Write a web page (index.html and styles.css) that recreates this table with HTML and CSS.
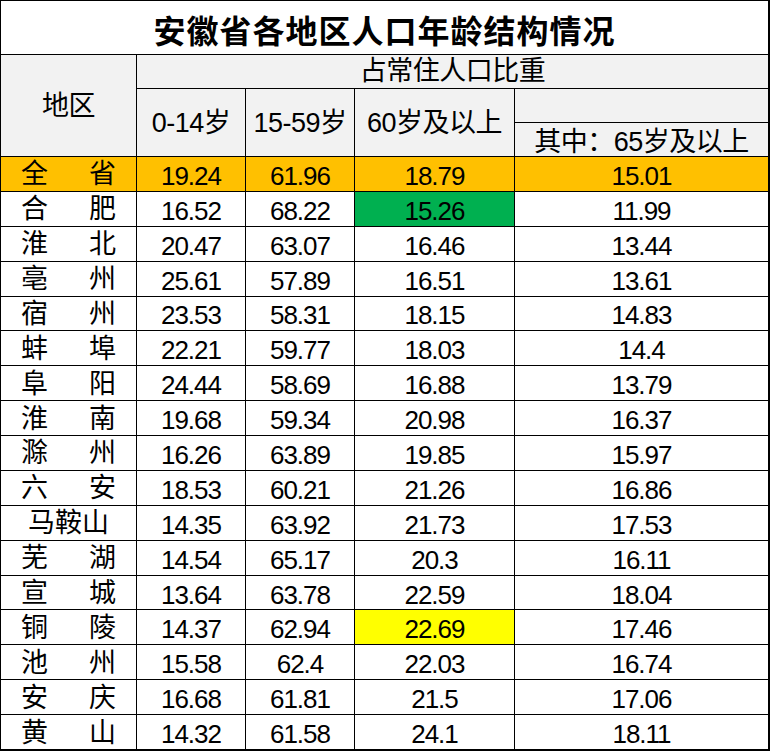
FILE: index.html
```html
<!DOCTYPE html>
<html lang="zh-CN">
<head>
<meta charset="utf-8">
<title>安徽省各地区人口年龄结构情况</title>
<link rel="stylesheet" href="styles.css">
</head>
<body>
<div class="sheet">
  <div class="title">安徽省各地区人口年龄结构情况</div>
  <div class="hd hd-region">地区</div>
  <div class="hd hd-share">占常住人口比重</div>
  <div class="hd hd-c2">0-14岁</div>
  <div class="hd hd-c3">15-59岁</div>
  <div class="hd hd-c4">60岁及以上</div>
  <div class="hd hd-c5a"></div>
  <div class="hd hd-c5b">其中：65岁及以上</div>

  <div class="cell name total"><span>全</span><span>省</span></div>
  <div class="cell num total">19.24</div>
  <div class="cell num total">61.96</div>
  <div class="cell num total">18.79</div>
  <div class="cell num total">15.01</div>

  <div class="cell name"><span>合</span><span>肥</span></div>
  <div class="cell num">16.52</div>
  <div class="cell num">68.22</div>
  <div class="cell num green">15.26</div>
  <div class="cell num">11.99</div>

  <div class="cell name"><span>淮</span><span>北</span></div>
  <div class="cell num">20.47</div>
  <div class="cell num">63.07</div>
  <div class="cell num">16.46</div>
  <div class="cell num">13.44</div>

  <div class="cell name"><span>亳</span><span>州</span></div>
  <div class="cell num">25.61</div>
  <div class="cell num">57.89</div>
  <div class="cell num">16.51</div>
  <div class="cell num">13.61</div>

  <div class="cell name"><span>宿</span><span>州</span></div>
  <div class="cell num">23.53</div>
  <div class="cell num">58.31</div>
  <div class="cell num">18.15</div>
  <div class="cell num">14.83</div>

  <div class="cell name"><span>蚌</span><span>埠</span></div>
  <div class="cell num">22.21</div>
  <div class="cell num">59.77</div>
  <div class="cell num">18.03</div>
  <div class="cell num">14.4</div>

  <div class="cell name"><span>阜</span><span>阳</span></div>
  <div class="cell num">24.44</div>
  <div class="cell num">58.69</div>
  <div class="cell num">16.88</div>
  <div class="cell num">13.79</div>

  <div class="cell name"><span>淮</span><span>南</span></div>
  <div class="cell num">19.68</div>
  <div class="cell num">59.34</div>
  <div class="cell num">20.98</div>
  <div class="cell num">16.37</div>

  <div class="cell name"><span>滁</span><span>州</span></div>
  <div class="cell num">16.26</div>
  <div class="cell num">63.89</div>
  <div class="cell num">19.85</div>
  <div class="cell num">15.97</div>

  <div class="cell name"><span>六</span><span>安</span></div>
  <div class="cell num">18.53</div>
  <div class="cell num">60.21</div>
  <div class="cell num">21.26</div>
  <div class="cell num">16.86</div>

  <div class="cell name single">马鞍山</div>
  <div class="cell num">14.35</div>
  <div class="cell num">63.92</div>
  <div class="cell num">21.73</div>
  <div class="cell num">17.53</div>

  <div class="cell name"><span>芜</span><span>湖</span></div>
  <div class="cell num">14.54</div>
  <div class="cell num">65.17</div>
  <div class="cell num">20.3</div>
  <div class="cell num">16.11</div>

  <div class="cell name"><span>宣</span><span>城</span></div>
  <div class="cell num">13.64</div>
  <div class="cell num">63.78</div>
  <div class="cell num">22.59</div>
  <div class="cell num">18.04</div>

  <div class="cell name"><span>铜</span><span>陵</span></div>
  <div class="cell num">14.37</div>
  <div class="cell num">62.94</div>
  <div class="cell num yellow">22.69</div>
  <div class="cell num">17.46</div>

  <div class="cell name"><span>池</span><span>州</span></div>
  <div class="cell num">15.58</div>
  <div class="cell num">62.4</div>
  <div class="cell num">22.03</div>
  <div class="cell num">16.74</div>

  <div class="cell name"><span>安</span><span>庆</span></div>
  <div class="cell num">16.68</div>
  <div class="cell num">61.81</div>
  <div class="cell num">21.5</div>
  <div class="cell num">17.06</div>

  <div class="cell name"><span>黄</span><span>山</span></div>
  <div class="cell num">14.32</div>
  <div class="cell num">61.58</div>
  <div class="cell num">24.1</div>
  <div class="cell num">18.11</div>
</div>
</body>
</html>
```
FILE: styles.css
```css
html, body {
  margin: 0;
  padding: 0;
  background: #ffffff;
}

.sheet {
  box-sizing: border-box;
  width: 770px;
  height: 751px;
  padding: 1px 2px 2px 1px;
  background: #000000;
  display: grid;
  grid-template-columns: 135px 108px 108px 159px 253px;
  grid-template-rows: 53px 33px 33px 33px repeat(17, 1fr);
  gap: 1px;
  font-family: "Liberation Sans", "Noto Sans CJK SC", sans-serif;
  font-size: 27px;
  color: #000000;
}

.sheet > div {
  display: flex;
  align-items: center;
  justify-content: center;
  line-height: 1;
  background: #ffffff;
  white-space: nowrap;
}

.title {
  grid-column: 1 / -1;
  grid-row: 1;
  font-family: "Noto Sans CJK SC", sans-serif;
  font-weight: bold;
  font-size: 32px;
  letter-spacing: 1px;
  padding-top: 2px;
}

.hd {
  background: #f2f2f2 !important;
  letter-spacing: -0.5px;
}

.hd-region { grid-column: 1; grid-row: 2 / span 3; padding-top: 2px; }
.hd-share  { grid-column: 2 / span 4; grid-row: 2; }
.hd-c2 { grid-column: 2; grid-row: 3 / span 2; padding-top: 2px; }
.hd-c3 { grid-column: 3; grid-row: 3 / span 2; padding-top: 2px; }
.hd-c4 { grid-column: 4; grid-row: 3 / span 2; padding-top: 2px; }
.hd-c5a { grid-column: 5; grid-row: 3; }
.hd-c5b { grid-column: 5; grid-row: 4; padding-top: 5px; }

.name {
  justify-content: space-between !important;
  padding: 2px 20px 0 20px;
}

.name.single {
  justify-content: center !important;
  padding: 2px 0 0 0;
}

.num {
  font-size: 26px;
  letter-spacing: -1px;
  padding-top: 4px;
}

.total { background: #ffc000 !important; }
.green { background: #00b050 !important; }
.yellow { background: #ffff00 !important; }
```
